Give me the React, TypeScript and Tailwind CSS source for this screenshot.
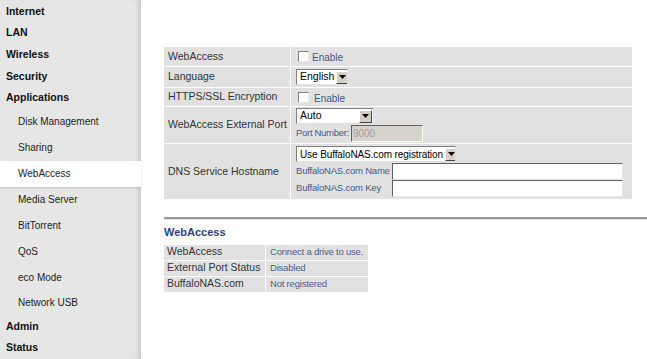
import { ReactNode } from 'react';

const menu: { label: string; sub?: boolean; active?: boolean }[] = [
  { label: 'Internet' },
  { label: 'LAN' },
  { label: 'Wireless' },
  { label: 'Security' },
  { label: 'Applications' },
  { label: 'Disk Management', sub: true },
  { label: 'Sharing', sub: true },
  { label: 'WebAccess', sub: true, active: true },
  { label: 'Media Server', sub: true },
  { label: 'BitTorrent', sub: true },
  { label: 'QoS', sub: true },
  { label: 'eco Mode', sub: true },
  { label: 'Network USB', sub: true },
  { label: 'Admin' },
  { label: 'Status' },
];

function Arrow() {
  return (
    <span className="flex h-[13px] w-[13px] shrink-0 items-center justify-center border border-t-white border-l-white border-r-[#404040] border-b-[#404040] bg-[#d4d0c8]">
      <svg width="7" height="4" viewBox="0 0 7 4">
        <path d="M0 0h7L3.5 4z" fill="#000" />
      </svg>
    </span>
  );
}

function Select({ value, width, size }: { value: string; width: string; size: string }) {
  return (
    <div className={`${width} ${size} flex h-[16px] items-center justify-between gap-[2px] overflow-hidden whitespace-nowrap border border-t-[#808080] border-l-[#808080] border-r-[#e0e0e0] border-b-[#e0e0e0] bg-white pl-[3px] pr-[1px] text-black`}>
      <span>{value}</span>
      <Arrow />
    </div>
  );
}

function Checkbox() {
  return <span className="inline-block h-[11px] w-[11px] border border-t-[#808080] border-l-[#808080] border-r-[#e8e8e8] border-b-[#e8e8e8] bg-white" />;
}

function Row({ label, children, h }: { label: string; children: ReactNode; h: string }) {
  return (
    <div className={`flex ${h}`}>
      <div className="flex w-[126px] items-center whitespace-nowrap bg-[#e1e1e1] pl-[4px] text-[10.5px] text-[#333]">{label}</div>
      <div className="ml-[1px] flex flex-1 flex-col justify-center bg-[#e1e1e1] pl-[5px]">{children}</div>
    </div>
  );
}

export default function App() {
  return (
    <div className="flex h-[359px] w-[647px] overflow-hidden bg-white" style={{ fontFamily: '"Liberation Sans", Arial, sans-serif' }}>
      {/* Sidebar */}
      <div className="flex w-[141px] shrink-0 flex-col bg-[#e6e6e6] pt-[1px] shadow-[inset_-5px_0_4px_-2px_rgba(0,0,0,0.12)]">
        {menu.map(m =>
          m.sub ? (
            <div
              key={m.label}
              className={`flex h-[26px] items-center whitespace-nowrap pl-[18px] text-[10px] text-[#222] ${m.active ? 'bg-white shadow-[0_1px_2px_rgba(0,0,0,0.15)]' : ''}`}
            >
              {m.label}
            </div>
          ) : (
            <div key={m.label} className="flex h-[21.7px] items-center whitespace-nowrap pl-[6px] text-[10.5px] font-bold text-[#111]">
              {m.label}
            </div>
          )
        )}
      </div>

      {/* Main */}
      <div className="flex flex-1 flex-col pl-[23px] pt-[47px]">
        <div className="flex w-[468px] flex-col gap-[1px]">
          <Row label="WebAccess" h="h-[19px]">
            <div className="flex items-center gap-[3px] pl-[2px]">
              <Checkbox />
              <span className="mt-[2px] text-[10px] text-[#3d5a8c]">Enable</span>
            </div>
          </Row>
          <Row label="Language" h="h-[20px]">
            <Select value="English" width="w-[52px]" size="text-[10.5px]" />
          </Row>
          <Row label="HTTPS/SSL Encryption" h="h-[18px]">
            <div className="flex items-center gap-[5px] pl-[2px]">
              <Checkbox />
              <span className="mt-[2px] text-[10px] text-[#3d5a8c]">Enable</span>
            </div>
          </Row>
          <Row label="WebAccess External Port" h="h-[36px]">
            <Select value="Auto" width="w-[78px]" size="text-[10.5px]" />
            <div className="mt-[1px] flex items-center gap-[2px]">
              <span className="whitespace-nowrap text-[9.5px] tracking-[-0.3px] text-[#3d5a8c]">Port Number:</span>
              <div className="flex h-[17px] w-[72px] items-center border border-t-[#606060] border-l-[#606060] border-r-white border-b-white bg-[#d6d3cc] pl-[1px] text-[10px] text-[#a0a0a0]">
                9000
              </div>
            </div>
          </Row>
          <Row label="DNS Service Hostname" h="h-[55px]">
            <Select value="Use BuffaloNAS.com registration" width="w-[160px]" size="text-[10px] tracking-[-0.1px]" />
            <div className="mt-[1px] flex items-center">
              <span className="w-[96px] whitespace-nowrap text-[9.5px] tracking-[-0.2px] text-[#3d5a8c]">BuffaloNAS.com Name</span>
              <div className="h-[17px] w-[231px] border border-t-[#606060] border-l-[#606060] border-r-[#e8e8e8] border-b-[#e8e8e8] bg-white" />
            </div>
            <div className="flex items-center">
              <span className="w-[96px] whitespace-nowrap text-[9.5px] tracking-[-0.2px] text-[#3d5a8c]">BuffaloNAS.com Key</span>
              <div className="h-[17px] w-[231px] border border-t-[#606060] border-l-[#606060] border-r-[#e8e8e8] border-b-[#e8e8e8] bg-white" />
            </div>
          </Row>
        </div>

        <div className="mt-[18px] h-[2px] bg-[#9a9a9a] shadow-[0_1px_0_#e0e0e0]" />

        <div className="mt-[5px] text-[11px] font-bold text-[#2b3f8c]">WebAccess</div>

        <div className="mt-[4px] flex w-[204px] flex-col gap-[1px]">
          {[
            ['WebAccess', 'Connect a drive to use.'],
            ['External Port Status', 'Disabled'],
            ['BuffaloNAS.com', 'Not registered'],
          ].map(([k, v]) => (
            <div key={k} className="flex h-[15px]">
              <div className="flex w-[101px] items-center whitespace-nowrap bg-[#e1e1e1] pl-[3px] text-[10.5px] text-[#333]">{k}</div>
              <div className="ml-[1px] flex flex-1 items-center whitespace-nowrap bg-[#e1e1e1] pl-[4px] text-[9.5px] tracking-[-0.2px] text-[#4a5f86]">{v}</div>
            </div>
          ))}
        </div>
      </div>
    </div>
  );
}
